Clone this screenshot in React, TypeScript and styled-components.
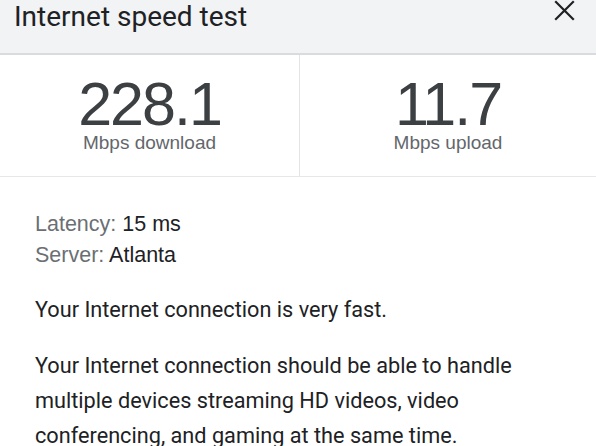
import React from "react";
import styled, { createGlobalStyle } from "styled-components";

const Global = createGlobalStyle`
  html, body { margin: 0; padding: 0; background: #ffffff; }
  body { font-family: Roboto, "Liberation Sans", Arial, sans-serif; }
`;

const Page = styled.div`
  width: 596px;
  height: 446px;
  overflow: hidden;
  background: #ffffff;
`;

const Header = styled.header`
  height: 53px;
  background: #f1f3f4;
  border-bottom: 2px solid #d9dbde;
  display: flex;
  align-items: flex-start;
  justify-content: space-between;
  padding: 0 21px 0 14px;
  box-sizing: content-box;
`;

const Title = styled.h1`
  margin: 0;
  font-family: Roboto, "Liberation Sans", sans-serif;
  font-weight: 400;
  font-size: 28px;
  line-height: 34px;
  color: #202124;
`;

const CloseButton = styled.button`
  border: 0;
  background: transparent;
  padding: 0;
  margin-top: 0;
  width: 22px;
  height: 22px;
  display: flex;
  align-items: center;
  justify-content: center;
  cursor: pointer;
`;

const Metrics = styled.section`
  display: grid;
  grid-template-columns: 299px 1fr;
  height: 121px;
  border-bottom: 1px solid #e6e7e9;
`;

const Metric = styled.div<{ $divider?: boolean }>`
  display: flex;
  flex-direction: column;
  align-items: center;
  justify-content: flex-start;
  padding-top: 20px;
  border-left: ${(p) => (p.$divider ? "1px solid #e3e4e6" : "none")};
`;

const Value = styled.div`
  font-family: "Liberation Sans", Arial, sans-serif;
  font-size: 61px;
  line-height: 58px;
  color: #3c4043;
  letter-spacing: -2px;
`;

const Unit = styled.div`
  font-family: "Liberation Sans", Arial, sans-serif;
  font-size: 19px;
  line-height: 20px;
  color: #63676c;
`;

const Body = styled.section`
  padding: 32px 20px 0 35px;
`;

const InfoList = styled.div`
  font-family: "Liberation Sans", Arial, sans-serif;
  font-size: 21.5px;
  line-height: 31px;
`;

const InfoRow = styled.div``;

const Label = styled.span`
  color: #6b6f74;
`;

const InfoValue = styled.span`
  color: #202124;
`;

const Paragraph = styled.p`
  margin: 21px 0 0;
  font-family: Roboto, "Liberation Sans", sans-serif;
  font-size: 21.7px;
  line-height: 35px;
  color: #202124;
`;

const CloseIcon = () => (
  <svg width="22" height="22" viewBox="0 0 22 22" aria-hidden="true">
    <path d="M3 2 L20 19 M20 2 L3 19" stroke="#202124" strokeWidth="2.2" strokeLinecap="square" fill="none" />
  </svg>
);

export default function App() {
  return (
    <Page>
      <Global />
      <Header>
        <Title>Internet speed test</Title>
        <CloseButton aria-label="Close">
          <CloseIcon />
        </CloseButton>
      </Header>
      <Metrics>
        <Metric>
          <Value>228.1</Value>
          <Unit>Mbps download</Unit>
        </Metric>
        <Metric $divider>
          <Value>11.7</Value>
          <Unit>Mbps upload</Unit>
        </Metric>
      </Metrics>
      <Body>
        <InfoList>
          <InfoRow>
            <Label>Latency: </Label>
            <InfoValue>15 ms</InfoValue>
          </InfoRow>
          <InfoRow>
            <Label>Server: </Label>
            <InfoValue>Atlanta</InfoValue>
          </InfoRow>
        </InfoList>
        <Paragraph>Your Internet connection is very fast.</Paragraph>
        <Paragraph>
          Your Internet connection should be able to handle multiple devices streaming HD videos, video
          conferencing, and gaming at the same time.
        </Paragraph>
      </Body>
    </Page>
  );
}
